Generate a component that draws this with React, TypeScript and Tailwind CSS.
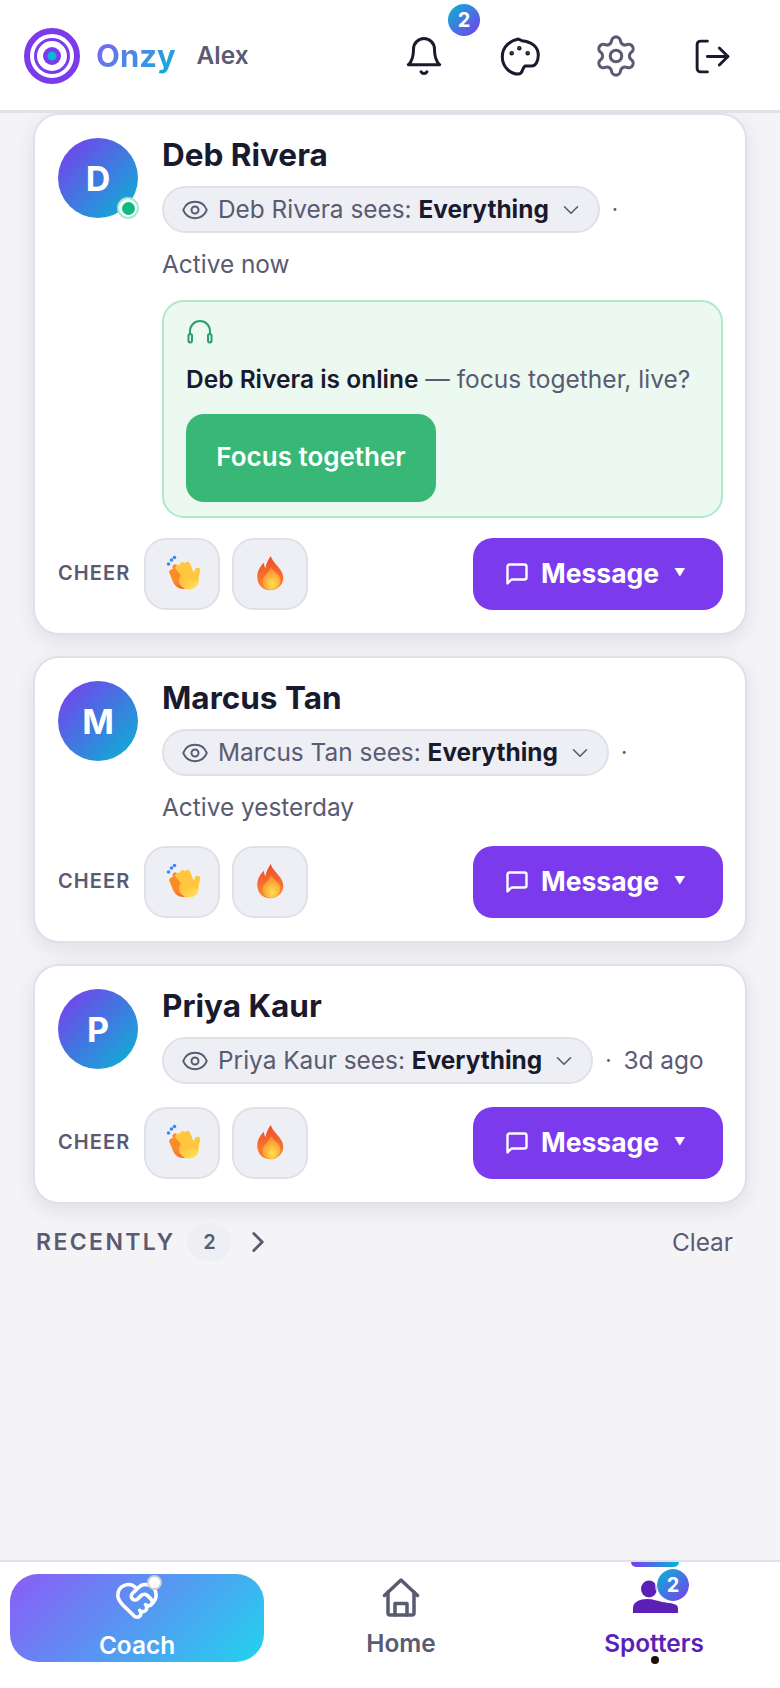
import { ChevronDown, ChevronRight, Eye, HeartHandshake, LogOut, Settings } from "lucide-react";

type Spotter = {
  name: string;
  initial: string;
  online?: boolean;
  last: string;
};

const spotters: Spotter[] = [
  { name: "Deb Rivera", initial: "D", online: true, last: "Active now" },
  { name: "Marcus Tan", initial: "M", last: "Active yesterday" },
  { name: "Priya Kaur", initial: "P", last: "3d ago" },
];

function Logo() {
  return (
    <svg width="56" height="56" viewBox="0 0 56 56" fill="none" className="block shrink-0">
      <circle cx="28" cy="28" r="25" stroke="#7c3aed" strokeWidth="6" />
      <circle cx="28" cy="28" r="16.500" stroke="#7c3aed" strokeWidth="3" />
      <circle cx="28" cy="28" r="9" fill="#7c3aed" />
      <circle cx="28" cy="28" r="4.500" fill="#06b6d4" />
    </svg>
  );
}

function BellIcon() {
  return (
    <svg width="42" height="42" viewBox="0 0 24 24" fill="none" stroke="#1a1a2e" strokeWidth="1.700" strokeLinecap="round" strokeLinejoin="round" className="block">
      <path d="M6 8a6 6 0 0 1 12 0c0 7 3 9 3 9H3s3-2 3-9" />
      <path d="M10.300 21a1.940 1.940 0 0 0 3.400 0" />
    </svg>
  );
}

function PaletteIcon() {
  return (
    <svg width="40" height="40" viewBox="0 0 40 40" fill="none" stroke="#1a1a2e" strokeWidth="3" strokeLinecap="round" strokeLinejoin="round" className="block">
      <path d="M18.300 3C11 4.500 2.300 10 2.300 20.700 2.300 30.700 10 38 18.300 38c5 0 3.400-5.700 6.700-8 2 0 6.700 0 6.700 0 3.500 0 6.600-4 6.600-11 0-8-6.600-13.300-16.600-14.300z" />
      <circle cx="11.700" cy="17.300" r="0.800" fill="#1a1a2e" />
      <circle cx="19.300" cy="12.300" r="0.800" fill="#1a1a2e" />
      <circle cx="27.700" cy="17.300" r="0.800" fill="#1a1a2e" />
    </svg>
  );
}

function HomeIcon() {
  return (
    <svg width="38" height="40" viewBox="0 0 38 40" fill="none" stroke="#5a5a72" strokeWidth="3.500" strokeLinecap="round" strokeLinejoin="round" className="block">
      <path d="M2.500 17.500 19 2l16.500 15.500" />
      <path d="M6 14v21a2 2 0 0 0 2 2h22a2 2 0 0 0 2-2V14" />
      <path d="M13 37V25.500h12V37" />
    </svg>
  );
}

function ClapEmoji() {
  return (
    <svg width="50" height="50" viewBox="-3 -1 50 50" fill="none" strokeLinecap="round" className="block">
      <defs>
        <linearGradient id="clapBack" x1="0" y1="0" x2="1" y2="1">
          <stop offset="0" stopColor="#ffa726" />
          <stop offset="1" stopColor="#f4622c" />
        </linearGradient>
        <linearGradient id="clapFront" x1="0" y1="0" x2="1" y2="1">
          <stop offset="0" stopColor="#ffb52e" />
          <stop offset="1" stopColor="#ffe45c" />
        </linearGradient>
      </defs>
      <path d="M9 22c2-3 6-5 9-3l10 11c2 4 0 9-5 9-5 0-8-3-10-7z" fill="url(#clapBack)" />
      <g stroke="#f98b2b" strokeWidth="5">
        <path d="M12 22l8 10" />
        <path d="M15 17l9 12" />
      </g>
      <ellipse cx="29" cy="30" rx="10" ry="9.500" fill="url(#clapFront)" />
      <g stroke="#ffc63e" strokeWidth="5.500">
        <path d="M27 28 18 17.500" />
        <path d="M29 26 22.500 15" />
        <path d="M32 26 27.500 14.500" />
        <path d="M35.500 28 37.500 20.500" />
      </g>
      <g fill="#3b88f5">
        <circle cx="8.500" cy="14" r="1.800" />
        <circle cx="11.500" cy="10" r="1.800" />
        <circle cx="14.500" cy="7.500" r="1.800" />
      </g>
    </svg>
  );
}

function FireEmoji() {
  return (
    <svg width="34" height="36" viewBox="0 0 34 36" className="block">
      <defs>
        <linearGradient id="fireOuter" x1="0.500" y1="0" x2="0.500" y2="1">
          <stop offset="0" stopColor="#ee4a2e" />
          <stop offset="1" stopColor="#fb8a2e" />
        </linearGradient>
        <radialGradient id="fireInner" cx="0.550" cy="0.750" r="0.700">
          <stop offset="0" stopColor="#ffe14d" />
          <stop offset="1" stopColor="#fb8a2e" />
        </radialGradient>
      </defs>
      <path d="M17.700 0C20 8 30.300 13 30.300 21.700 30.300 29 24 34.300 17 34.300 10 34.300 4.300 29 4.300 21 4.300 15 7 10 11 6.700c0 2.300.5 4.300 1.500 5.300.5-4 2.500-8 5.200-12z" fill="url(#fireOuter)" />
      <path d="M18 11c2 5 9.500 7 9.500 13 0 6-4.500 10-9.500 10-5 0-8.500-4-8.500-9 0-5 6.500-8 8.500-14z" fill="url(#fireInner)" />
    </svg>
  );
}

function MessageIcon() {
  return (
    <svg width="24" height="24" viewBox="0 0 24 24" fill="none" stroke="white" strokeWidth="2.400" strokeLinejoin="round" className="block">
      <path d="M2.500 4.500a2 2 0 0 1 2-2h15a2 2 0 0 1 2 2v11a2 2 0 0 1-2 2H6.500l-4 4z" />
    </svg>
  );
}

function SpottersIcon() {
  return (
    <svg width="46" height="33" viewBox="0 0 46 33" fill="#5b21b6" className="block">
      <ellipse cx="16" cy="9" rx="8" ry="8.500" />
      <path d="M0 33v-5c0-6 7-9 14-9 6 0 11 2 15 3 6 1 16 1 16 6v5z" />
    </svg>
  );
}

function Badge({ className }: { className: string }) {
  return (
    <span className={`absolute flex h-8 w-8 items-center justify-center rounded-full bg-[linear-gradient(135deg,#06b6d4,#7c3aed)] text-[20px] font-bold text-white ${className}`}>2</span>
  );
}

function SpotterCard({ spotter }: { spotter: Spotter }) {
  const { name, initial, online, last } = spotter;
  const isShort = last.includes("ago");
  return (
    <section className="rounded-[26px] border-2 border-[#e0e0ea] bg-white pt-[23px] pr-[22px] pb-[23px] pl-[23px] shadow-[0_6px_20px_rgba(26,26,46,0.09)]">
      <div className="flex gap-6">
        <div className="relative h-20 w-20 shrink-0">
          <div className="flex h-20 w-20 items-center justify-center rounded-full bg-[linear-gradient(135deg,#7c3aed,#06b6d4)] text-[34px] font-bold text-white">
            {initial}
          </div>
          {online && (
            <div className="absolute right-[-1px] bottom-[-1px] flex h-[22px] w-[22px] items-center justify-center rounded-full border-2 border-[#a7e8cf] bg-white">
              <div className="h-[13px] w-[13px] rounded-full bg-[#10b981]" />
            </div>
          )}
        </div>
        <div className="min-w-0 flex-1">
          <h2 className="text-[31.5px] leading-[34px] font-bold text-[#1a1a2e]">{name}</h2>
          <div className="mt-[14px] flex items-center gap-3 text-[24.4px] text-[#5a5a72]">
            <div className="flex h-[47px] items-center rounded-full border-2 border-[#e0e0ea] bg-[#eeeff4] pr-[14px] pl-[17px]">
              <Eye size={28} strokeWidth={1.7} className="mr-[9px]" />
              <span>{name} sees:&nbsp;</span>
              <span className="font-bold text-[#1a1a2e]">Everything</span>
              <ChevronDown size={26} strokeWidth={1.5} className="ml-[9px]" />
            </div>
            <span className="text-[22px]">·</span>
            {isShort && <span>{last}</span>}
          </div>
          {!isShort && <p className="mt-[15px] text-[24.4px] leading-[32px] text-[#5a5a72]">{last}</p>}
          {online && (
            <div className="mt-[20px] -mb-[3px] rounded-[22px] border-2 border-[#b0e8c9] bg-[#ebf9f1] px-[22px] pt-[17px] pb-[14px]">
              <svg width="28" height="26" viewBox="0 0 28 26" fill="none" stroke="#2a9d6a" strokeWidth="2" className="block">
                <path d="M4 15V12a10 10 0 0 1 20 0v3" />
                <rect x="2.500" y="15" width="3.500" height="8.500" rx="1.750" />
                <rect x="22" y="15" width="3.500" height="8.500" rx="1.750" />
              </svg>
              <p className="mt-[18px] text-[24.5px] leading-[32px] text-[#5a5a72]">
                <span className="font-semibold text-[#1a1a2e]">{name} is online</span> — focus together, live?
              </p>
              <button className="mt-[19px] block h-[88px] w-[250px] rounded-[18px] bg-[#38b776] pb-[3px] text-[26px] font-semibold text-white">Focus together</button>
            </div>
          )}
        </div>
      </div>
      <div className="mt-[23px] flex items-center">
        <span className="mb-[2px] w-[86px] text-[20px] font-semibold tracking-[1.100px] text-[#5a5a72]">CHEER</span>
        <button className="flex h-[72px] w-[76px] items-center justify-center rounded-[22px] border-2 border-[#e0e0ea] bg-[#eeeff4]">
          <ClapEmoji />
        </button>
        <button className="ml-3 flex h-[72px] w-[76px] items-center justify-center rounded-[22px] border-2 border-[#e0e0ea] bg-[#eeeff4]">
          <FireEmoji />
        </button>
        <button className="ml-auto flex h-[72px] w-[250px] items-center rounded-[20px] bg-[#7c3aed] pl-[32px] text-[26.5px] font-bold text-white">
          <MessageIcon />
          <span className="ml-[12px]">Message</span>
          <span className="mb-[3px] ml-[15px] text-[11px]">▼</span>
        </button>
      </div>
    </section>
  );
}

export default function App() {
  return (
    <div className="flex h-[1688px] w-[780px] flex-col overflow-hidden bg-[#f4f4f7] font-['Inter',sans-serif]">
      <header className="flex h-[113px] shrink-0 border-b-[3px] border-[#e0e0ea] bg-white pt-7 pr-5 pl-6">
        <div className="flex h-14 w-full items-center">
          <Logo />
          <span className="ml-[16px] bg-[linear-gradient(135deg,#8b5cf6,#06b6d4)] bg-clip-text text-[31px] font-bold text-transparent">Onzy</span>
          <span className="mb-[2px] ml-[21px] text-[24.4px] font-semibold text-[#5a5a72]">Alex</span>
          <div className="ml-auto flex items-center">
            <div className="relative flex w-24 justify-center">
              <BellIcon />
              <Badge className="-top-[31px] left-[72px]" />
            </div>
            <div className="flex w-24 justify-center"><PaletteIcon /></div>
            <div className="flex w-24 justify-center"><Settings size={46} strokeWidth={1.6} className="text-[#5a5a72]" /></div>
            <div className="flex w-24 justify-center"><LogOut size={41} strokeWidth={1.7} className="text-[#1a1a2e]" /></div>
          </div>
        </div>
      </header>

      <main className="flex flex-1 flex-col gap-[21px] overflow-hidden px-[33px]">
        {spotters.map(s => (
          <SpotterCard key={s.name} spotter={s} />
        ))}
        <div className="-mt-[2px] flex items-center pr-[14px] pl-[3px] text-[#5a5a72]">
          <span className="text-[23px] font-semibold tracking-[2.400px]">RECENTLY</span>
          <span className="ml-3 flex h-[38px] w-[44px] items-center justify-center rounded-full bg-[#eeeff4] text-[20px] font-semibold">2</span>
          <ChevronRight size={34} strokeWidth={2} className="ml-[10px]" />
          <span className="ml-auto text-[24.4px]">Clear</span>
        </div>
      </main>

      <nav className="relative grid h-[128px] shrink-0 grid-cols-[274px_254px_252px] border-t-2 border-[#e0e0ea] bg-white">
        <div className="pt-3 pl-[10px]">
          <button className="relative flex h-[88px] w-[254px] flex-col items-center rounded-[28px] bg-[linear-gradient(135deg,#8b5cf6,#22d3ee)] pt-[3px] text-[24.4px] font-semibold text-white">
            <HeartHandshake size={46} strokeWidth={1.9} />
            <span className="mt-[5px] leading-[34px]">Coach</span>
            <span className="absolute top-[1px] left-[137px] h-[15px] w-[15px] rounded-full border-2 border-[#d0d0d0] bg-white" />
          </button>
        </div>
        <div className="flex flex-col items-center pt-[16px] text-[#5a5a72]">
          <HomeIcon />
          <span className="mt-[9px] text-[24.4px] leading-[32px] font-semibold">Home</span>
        </div>
        <div className="relative flex flex-col items-center pt-[18px] text-[#5b21b6]">
          <span className="absolute top-0 left-[103px] h-[5px] w-12 rounded-b-md bg-[linear-gradient(90deg,#7c3aed,#06b6d4)]" />
          <div className="ml-[3px]"><SpottersIcon /></div>
          <Badge className="top-[7px] left-[129px] outline-2 outline-white/70" />
          <span className="mt-[14px] text-[24.4px] leading-[32px] font-semibold">Spotters</span>
          <span className="absolute top-[94px] left-[123px] h-2 w-2 rounded-full bg-[#1a1208]" />
        </div>
      </nav>
    </div>
  );
}
